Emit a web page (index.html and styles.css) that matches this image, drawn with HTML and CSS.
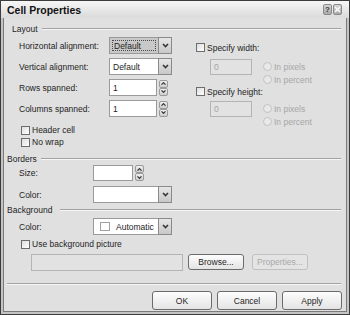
FILE: index.html
```html
<!DOCTYPE html>
<html lang="en">
<head>
    <meta charset="UTF-8">
    <title>Cell Properties</title>
    <link rel="stylesheet" href="styles.css">
</head>
<body>
    <div class="dialog">
        <div class="titlebar">
            <span class="title">Cell Properties</span>
            <div class="caption-btns">
                <span class="cap-btn help">?</span>
                <span class="cap-btn close">
                    <svg width="7" height="7" viewBox="0 0 7 7"><path d="M1 1 L6 6 M6 1 L1 6" stroke="#fafafa" stroke-width="1.6" fill="none"/></svg>
                </span>
            </div>
        </div>

        <div class="client">
            <div class="group-head indented"><span>Layout</span><i class="rule"></i></div>
            <div class="layout">
                <div class="layout-left">
                    <div class="field-row">
                        <label class="lbl wide">Horizontal alignment:</label>
                        <div class="select w63">
                            <span class="select-text focused"><span class="focus-rect">Default</span></span>
                            <span class="drop-btn"><svg width="7" height="5" viewBox="0 0 7 5"><path d="M1 1 L3.5 3.6 L6 1" stroke="#333" stroke-width="1.5" fill="none"/></svg></span>
                        </div>
                    </div>
                    <div class="field-row">
                        <label class="lbl wide">Vertical alignment:</label>
                        <div class="select w63">
                            <span class="select-text">Default</span>
                            <span class="drop-btn"><svg width="7" height="5" viewBox="0 0 7 5"><path d="M1 1 L3.5 3.6 L6 1" stroke="#333" stroke-width="1.5" fill="none"/></svg></span>
                        </div>
                    </div>
                    <div class="field-row">
                        <label class="lbl wide">Rows spanned:</label>
                        <span class="text-box w48">1</span>
                        <span class="spin">
                            <span class="spin-half"><svg width="5" height="3" viewBox="0 0 5 3"><path d="M0.5 2.7 L2.5 0.6 L4.5 2.7" stroke="#333" stroke-width="1.1" fill="none"/></svg></span>
                            <span class="spin-half"><svg width="5" height="3" viewBox="0 0 5 3"><path d="M0.5 0.3 L2.5 2.4 L4.5 0.3" stroke="#333" stroke-width="1.1" fill="none"/></svg></span>
                        </span>
                    </div>
                    <div class="field-row">
                        <label class="lbl wide">Columns spanned:</label>
                        <span class="text-box w48">1</span>
                        <span class="spin">
                            <span class="spin-half"><svg width="5" height="3" viewBox="0 0 5 3"><path d="M0.5 2.7 L2.5 0.6 L4.5 2.7" stroke="#333" stroke-width="1.1" fill="none"/></svg></span>
                            <span class="spin-half"><svg width="5" height="3" viewBox="0 0 5 3"><path d="M0.5 0.3 L2.5 2.4 L4.5 0.3" stroke="#333" stroke-width="1.1" fill="none"/></svg></span>
                        </span>
                    </div>
                    <div class="checks">
                        <div class="check"><span class="box"></span>Header cell</div>
                        <div class="check"><span class="box"></span>No wrap</div>
                    </div>
                </div>

                <div class="layout-right">
                    <div class="check tight"><span class="box"></span>Specify width:</div>
                    <div class="opt-block">
                        <span class="text-box disabled w42">0</span>
                        <div class="radios">
                            <div class="radio"><span class="dot"></span>In pixels</div>
                            <div class="radio"><span class="dot"></span>In percent</div>
                        </div>
                    </div>
                    <div class="check tight"><span class="box"></span>Specify height:</div>
                    <div class="opt-block second">
                        <span class="text-box disabled w42">0</span>
                        <div class="radios">
                            <div class="radio"><span class="dot"></span>In pixels</div>
                            <div class="radio"><span class="dot"></span>In percent</div>
                        </div>
                    </div>
                </div>
            </div>

            <div class="group-head borders-head"><span>Borders</span><i class="rule"></i></div>
            <div class="form">
                <div class="field-row size-row">
                    <label class="lbl">Size:</label>
                    <span class="text-box w40"></span>
                    <span class="spin">
                        <span class="spin-half"><svg width="5" height="3" viewBox="0 0 5 3"><path d="M0.5 2.7 L2.5 0.6 L4.5 2.7" stroke="#333" stroke-width="1.1" fill="none"/></svg></span>
                        <span class="spin-half"><svg width="5" height="3" viewBox="0 0 5 3"><path d="M0.5 0.3 L2.5 2.4 L4.5 0.3" stroke="#333" stroke-width="1.1" fill="none"/></svg></span>
                    </span>
                </div>
                <div class="field-row color-row">
                    <label class="lbl">Color:</label>
                    <div class="select w79">
                        <span class="select-text"></span>
                        <span class="drop-btn"><svg width="7" height="5" viewBox="0 0 7 5"><path d="M1 1 L3.5 3.6 L6 1" stroke="#333" stroke-width="1.5" fill="none"/></svg></span>
                    </div>
                </div>
            </div>

            <div class="group-head background-head"><span>Background</span><i class="rule"></i></div>
            <div class="form">
                <div class="field-row bg-color-row">
                    <label class="lbl">Color:</label>
                    <div class="select w79">
                        <span class="select-text swatch-text"><span class="swatch"></span>Automatic</span>
                        <span class="drop-btn"><svg width="7" height="5" viewBox="0 0 7 5"><path d="M1 1 L3.5 3.6 L6 1" stroke="#333" stroke-width="1.5" fill="none"/></svg></span>
                    </div>
                </div>
                <div class="check picture-check"><span class="box"></span>Use background picture</div>
                <div class="picture-row">
                    <span class="text-box disabled w152"></span>
                    <button class="btn small browse">Browse...</button>
                    <button class="btn small props" disabled>Properties...</button>
                </div>
            </div>

            <div class="separator"></div>
            <div class="actions">
                <button class="btn">OK</button>
                <button class="btn">Cancel</button>
                <button class="btn">Apply</button>
            </div>
        </div>
    </div>
</body>
</html>
```

FILE: styles.css
```css
* {
    box-sizing: border-box;
}
body {
    margin: 0;
    font-family: "Liberation Sans", Arial, sans-serif;
    font-size: 8.5px;
    color: #1e1e1e;
    background: #ffffff;
}
.dialog {
    width: 350px;
    height: 315px;
    border: 1px solid #3c3c3c;
    background: #c4c4c4;
    padding: 0 2px 2px;
    display: flex;
    flex-direction: column;
}
.titlebar {
    height: 17px;
    margin: 0 -2px;
    padding: 0 7px 0 6px;
    background: linear-gradient(#f6f6f6, #dadada);
    display: flex;
    align-items: center;
    justify-content: space-between;
}
.title {
    font-weight: bold;
    font-size: 10.5px;
    color: #111;
}
.caption-btns {
    display: flex;
    gap: 1px;
}
.cap-btn {
    width: 9px;
    height: 11px;
    border: 1px solid #8a8a8a;
    border-radius: 2px;
    background: linear-gradient(#d6d6d6, #a8a8a8);
    display: flex;
    align-items: center;
    justify-content: center;
    font-size: 8px;
    font-weight: bold;
    color: #3a3a3a;
}
.client {
    flex: 1;
    background: #e0e0e0;
    border: 1px solid #7a7a7a;
    border-top: none;
    padding: 6px 5px 0 3px;
    display: flex;
    flex-direction: column;
}
.group-head {
    height: 10px;
    display: flex;
    align-items: center;
    gap: 4px;
}
.group-head.indented {
    padding-left: 5px;
}
.group-head .rule {
    flex: 1;
    border-top: 1px solid #a2a2a2;
    border-bottom: 1px solid #f6f6f6;
}
.borders-head {
    margin-top: 6px;
}
.background-head {
    margin-top: 2px;
    gap: 8px;
}
.layout {
    display: flex;
    padding-top: 3px;
}
.layout-left {
    width: 165px;
    padding-left: 12px;
    display: flex;
    flex-direction: column;
    gap: 4px;
}
.layout-right {
    margin-left: 24px;
    padding-top: 5px;
    display: flex;
    flex-direction: column;
}
.field-row {
    height: 17px;
    display: flex;
    align-items: center;
}
.lbl {
    width: 74px;
}
.lbl.wide {
    width: 90px;
}
.select {
    height: 17px;
    display: flex;
}
.w63 { width: 63px; }
.w79 { width: 79px; }
.w48 { width: 48px; }
.w42 { width: 42px; }
.w40 { width: 40px; }
.w152 { width: 152px; }
.select-text {
    flex: 1;
    background: #ffffff;
    border: 1px solid #9a9a9a;
    border-right: none;
    padding-left: 3px;
    display: flex;
    align-items: center;
}
.select-text.focused {
    background: #c8c8c8;
    padding: 2px;
}
.focus-rect {
    flex: 1;
    height: 100%;
    border: 1px dotted #4a4a4a;
    padding-left: 1px;
    display: flex;
    align-items: center;
}
.drop-btn {
    width: 14px;
    border: 1px solid #8a8a8a;
    background: linear-gradient(#e6e6e6, #c8c8c8);
    display: flex;
    align-items: center;
    justify-content: center;
}
.text-box {
    height: 17px;
    background: #ffffff;
    border: 1px solid #9a9a9a;
    padding-left: 3px;
    display: flex;
    align-items: center;
}
.text-box.disabled {
    height: 16px;
    background: #e2e2e2;
    border-color: #b4b4b4;
    color: #a4a4a4;
}
.spin {
    width: 9px;
    height: 16px;
    margin-left: 2px;
    display: flex;
    flex-direction: column;
    gap: 0;
}
.spin-half {
    flex: 1;
    border: 1px solid #9a9a9a;
    border-radius: 2px;
    background: linear-gradient(#f0f0f0, #cdcdcd);
    display: flex;
    align-items: center;
    justify-content: center;
}
.checks {
    margin-top: 3px;
    display: flex;
    flex-direction: column;
}
.check {
    height: 12px;
    padding-left: 2px;
    display: flex;
    align-items: center;
    gap: 2px;
}
.check.tight {
    height: 11px;
    padding-left: 0;
}
.box {
    width: 9px;
    height: 9px;
    border: 1px solid #6d6d6d;
    background: linear-gradient(135deg, #dedede, #ffffff);
}
.opt-block {
    display: flex;
    margin-top: 6px;
    padding-left: 14px;
}
.opt-block.second {
    margin-top: 4px;
}
.radios {
    margin-left: 11px;
    margin-top: 1px;
    display: flex;
    flex-direction: column;
}
.radio {
    height: 13px;
    display: flex;
    align-items: center;
    gap: 2px;
    color: #a6a6a6;
}
.dot {
    width: 9px;
    height: 9px;
    border: 1px solid #c2c2c2;
    border-radius: 50%;
    background: #e8e8e8;
}
.form {
    padding-left: 12px;
    display: flex;
    flex-direction: column;
}
.size-row {
    margin-top: 1px;
    height: 16px;
}
.size-row .text-box {
    height: 16px;
}
.color-row {
    margin-top: 5px;
}
.bg-color-row {
    margin-top: 3px;
}
.swatch-text {
    padding-left: 6px;
    gap: 6px;
}
.swatch {
    width: 10px;
    height: 9px;
    border: 1px solid #a0a0a0;
    background: #ffffff;
}
.picture-check {
    margin-top: 3px;
}
.picture-row {
    margin-top: 4px;
    padding-left: 12px;
    display: flex;
    align-items: flex-start;
}
.picture-row .text-box {
    height: 17px;
}
.btn {
    width: 60px;
    height: 19px;
    border: 1px solid #6b6b6b;
    border-radius: 3px;
    background: linear-gradient(#fdfdfd, #e4e4e4);
    font-family: "Liberation Sans", Arial, sans-serif;
    font-size: 8.5px;
    color: #1e1e1e;
    padding: 0;
}
.btn.small {
    width: 56px;
    height: 16px;
}
.browse {
    margin-left: 5px;
}
.props {
    margin-left: 8px;
    border-color: #c0c0c0;
    color: #a8a8a8;
    background: #e4e4e4;
}
.separator {
    margin-top: 12px;
    border-top: 1px solid #a2a2a2;
    border-bottom: 1px solid #f6f6f6;
}
.actions {
    margin-top: 6px;
    margin-right: -1px;
    display: flex;
    justify-content: flex-end;
    gap: 5px;
}
```
